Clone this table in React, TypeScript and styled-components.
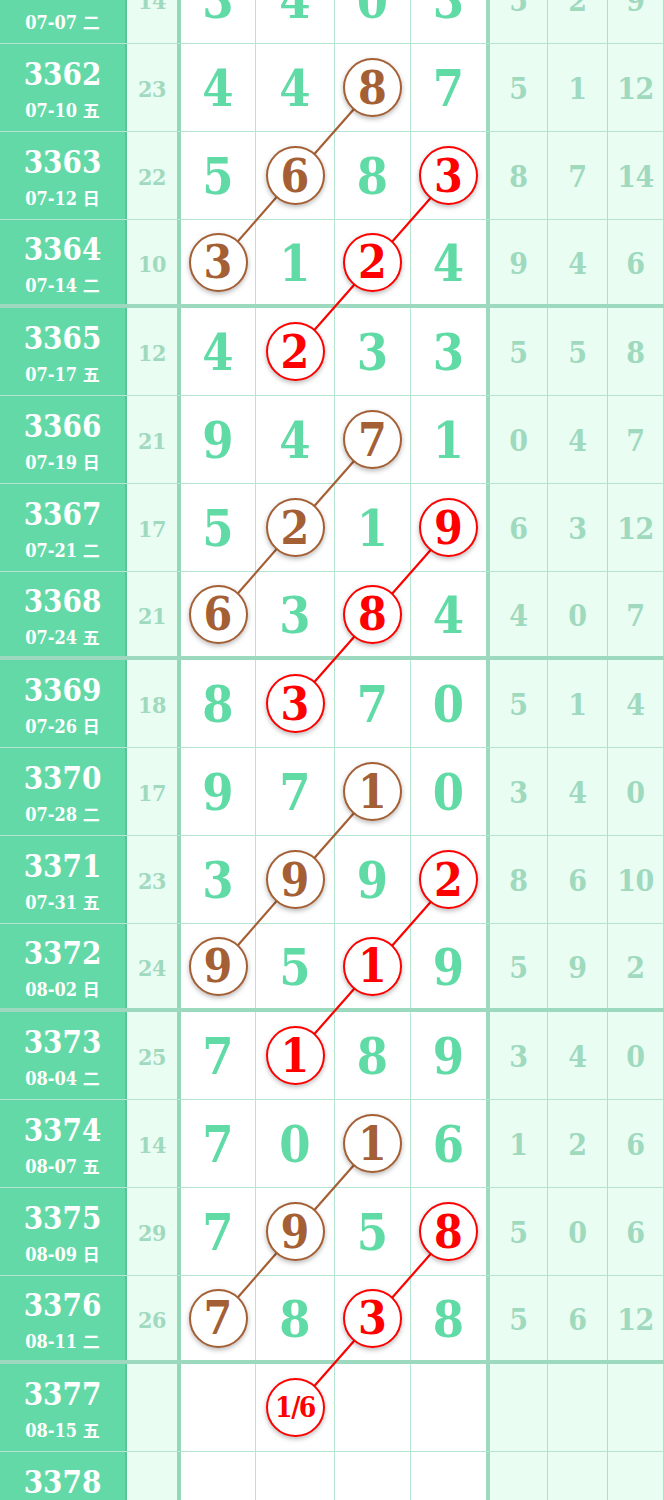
import React from 'react';
import styled, { createGlobalStyle } from 'styled-components';

const GlobalStyle = createGlobalStyle`
  html, body {
    margin: 0;
    padding: 0;
    background: #ffffff;
    overflow: hidden;
  }
`;

type Mark = 'brown' | 'red';

interface Row {
  id: string;
  date: string;
  sum: string;
  digits: string[];
  rest: string[];
  marks: Record<number, Mark>;
}

const COLS = [127, 54, 75, 79, 76, 79, 58, 60, 56];
const ROW_H = 88;
const MARK_COLOR: Record<Mark, string> = { brown: '#a45f35', red: '#ff0000' };

const rows: Row[] = [
  { id: '3361', date: '07-07 二', sum: '14', digits: ['3', '4', '0', '3'], rest: ['5', '2', '9'], marks: {} },
  { id: '3362', date: '07-10 五', sum: '23', digits: ['4', '4', '8', '7'], rest: ['5', '1', '12'], marks: { 2: 'brown' } },
  { id: '3363', date: '07-12 日', sum: '22', digits: ['5', '6', '8', '3'], rest: ['8', '7', '14'], marks: { 1: 'brown', 3: 'red' } },
  { id: '3364', date: '07-14 二', sum: '10', digits: ['3', '1', '2', '4'], rest: ['9', '4', '6'], marks: { 0: 'brown', 2: 'red' } },
  { id: '3365', date: '07-17 五', sum: '12', digits: ['4', '2', '3', '3'], rest: ['5', '5', '8'], marks: { 1: 'red' } },
  { id: '3366', date: '07-19 日', sum: '21', digits: ['9', '4', '7', '1'], rest: ['0', '4', '7'], marks: { 2: 'brown' } },
  { id: '3367', date: '07-21 二', sum: '17', digits: ['5', '2', '1', '9'], rest: ['6', '3', '12'], marks: { 1: 'brown', 3: 'red' } },
  { id: '3368', date: '07-24 五', sum: '21', digits: ['6', '3', '8', '4'], rest: ['4', '0', '7'], marks: { 0: 'brown', 2: 'red' } },
  { id: '3369', date: '07-26 日', sum: '18', digits: ['8', '3', '7', '0'], rest: ['5', '1', '4'], marks: { 1: 'red' } },
  { id: '3370', date: '07-28 二', sum: '17', digits: ['9', '7', '1', '0'], rest: ['3', '4', '0'], marks: { 2: 'brown' } },
  { id: '3371', date: '07-31 五', sum: '23', digits: ['3', '9', '9', '2'], rest: ['8', '6', '10'], marks: { 1: 'brown', 3: 'red' } },
  { id: '3372', date: '08-02 日', sum: '24', digits: ['9', '5', '1', '9'], rest: ['5', '9', '2'], marks: { 0: 'brown', 2: 'red' } },
  { id: '3373', date: '08-04 二', sum: '25', digits: ['7', '1', '8', '9'], rest: ['3', '4', '0'], marks: { 1: 'red' } },
  { id: '3374', date: '08-07 五', sum: '14', digits: ['7', '0', '1', '6'], rest: ['1', '2', '6'], marks: { 2: 'brown' } },
  { id: '3375', date: '08-09 日', sum: '29', digits: ['7', '9', '5', '8'], rest: ['5', '0', '6'], marks: { 1: 'brown', 3: 'red' } },
  { id: '3376', date: '08-11 二', sum: '26', digits: ['7', '8', '3', '8'], rest: ['5', '6', '12'], marks: { 0: 'brown', 2: 'red' } },
  { id: '3377', date: '08-15 五', sum: '', digits: ['', '1/6', '', ''], rest: ['', '', ''], marks: { 1: 'red' } },
  { id: '3378', date: '08-18 二', sum: '', digits: ['', '', '', ''], rest: ['', '', ''], marks: {} },
];

const serif = `"DejaVu Serif", "Liberation Serif", serif`;
const thin = 'rgba(70, 190, 140, 0.4)';
const thick = 'rgba(60, 180, 128, 0.5)';

const Board = styled.div`
  position: relative;
  width: 664px;
  margin-top: -44px;
`;

const RowLine = styled.div<{ $groupEnd: boolean }>`
  display: grid;
  grid-template-columns: ${COLS.map((w) => `${w}px`).join(' ')};
  height: ${ROW_H}px;
  box-sizing: border-box;
  border-bottom: ${(p) => (p.$groupEnd ? `4px solid ${thick}` : `1px solid ${thin}`)};
`;

const IssueCell = styled.div`
  background: #64d9a8;
  border-right: 2px solid #58c497;
  display: flex;
  flex-direction: column;
  align-items: center;
  justify-content: center;
  gap: 8px;
  padding-top: 4px;
  color: #ffffff;
  font-family: ${serif};
  font-stretch: condensed;
  font-weight: 700;
`;

const IssueNo = styled.div`
  font-size: 31px;
  line-height: 34px;
`;

const IssueDate = styled.div`
  font-size: 18px;
  line-height: 22px;
  font-family: ${serif}, "Noto Sans CJK SC", sans-serif;

  span {
    font-family: "Noto Sans CJK SC", sans-serif;
    font-size: 17px;
  }
`;

const Cell = styled.div<{ $tone: 'sum' | 'main' | 'rest'; $edge?: boolean }>`
  display: flex;
  align-items: center;
  justify-content: center;
  box-sizing: border-box;
  background: ${(p) => (p.$tone === 'main' ? '#ffffff' : '#e9fdf3')};
  border-right: ${(p) => (p.$edge ? `4px solid ${thick}` : `1px solid ${thin}`)};
  font-family: ${serif};
  font-stretch: condensed;
  font-weight: 700;
  color: ${(p) => (p.$tone === 'main' ? '#60dba6' : '#9fd9be')};
  font-size: ${(p) => (p.$tone === 'main' ? '50px' : p.$tone === 'sum' ? '23px' : '30px')};
  letter-spacing: ${(p) => (p.$tone === 'main' ? '0' : '-0.5px')};
  padding-top: 2px;
`;

const Ball = styled.div<{ $color: string; $small?: boolean }>`
  position: relative;
  z-index: 2;
  width: 59px;
  height: 59px;
  box-sizing: border-box;
  border-radius: 50%;
  border: 2.5px solid ${(p) => p.$color};
  background: #ffffff;
  color: ${(p) => p.$color};
  display: flex;
  align-items: center;
  justify-content: center;
  font-size: ${(p) => (p.$small ? '28px' : '46px')};
  letter-spacing: ${(p) => (p.$small ? '-1.5px' : '0')};
  box-shadow: 0 2px 5px rgba(0, 0, 0, 0.28);
  margin-top: -2px;
`;

const Links = styled.svg`
  position: absolute;
  left: 0;
  top: 0;
  z-index: 1;
  pointer-events: none;
`;

const colCenter = (c: number) => {
  const start = COLS.slice(0, c + 2).reduce((a, b) => a + b, 0);
  return start + (COLS[c + 2] - 1) / 2;
};

const IssueLabel = ({ date }: { date: string }) => {
  const [md, wd] = date.split(' ');
  return (
    <IssueDate>
      {md} <span>{wd}</span>
    </IssueDate>
  );
};

export default function App() {
  const segments: { x1: number; y1: number; x2: number; y2: number; color: string }[] = [];
  rows.forEach((row, i) => {
    const next = rows[i + 1];
    if (!next) return;
    Object.entries(row.marks).forEach(([k, color]) => {
      const c = Number(k);
      if (next.marks[c - 1] === color) {
        segments.push({
          x1: colCenter(c),
          y1: i * ROW_H + 44,
          x2: colCenter(c - 1),
          y2: (i + 1) * ROW_H + 44,
          color: MARK_COLOR[color],
        });
      }
    });
  });

  return (
    <>
      <GlobalStyle />
      <Board>
        {rows.map((row, i) => (
          <RowLine key={row.id} $groupEnd={i % 4 === 3}>
            <IssueCell>
              <IssueNo>{row.id}</IssueNo>
              <IssueLabel date={row.date} />
            </IssueCell>
            <Cell $tone="sum" $edge>
              {row.sum}
            </Cell>
            {row.digits.map((d, c) => {
              const mark = row.marks[c];
              return (
                <Cell key={c} $tone="main" $edge={c === 3}>
                  {mark ? (
                    <Ball $color={MARK_COLOR[mark]} $small={d.length > 1}>
                      {d}
                    </Ball>
                  ) : (
                    d
                  )}
                </Cell>
              );
            })}
            {row.rest.map((d, c) => (
              <Cell key={c} $tone="rest" $edge={false}>
                {d}
              </Cell>
            ))}
          </RowLine>
        ))}
        <Links width={664} height={rows.length * ROW_H}>
          {segments.map((s, i) => (
            <line key={i} x1={s.x1} y1={s.y1} x2={s.x2} y2={s.y2} stroke={s.color} strokeWidth={2.2} />
          ))}
        </Links>
      </Board>
    </>
  );
}
